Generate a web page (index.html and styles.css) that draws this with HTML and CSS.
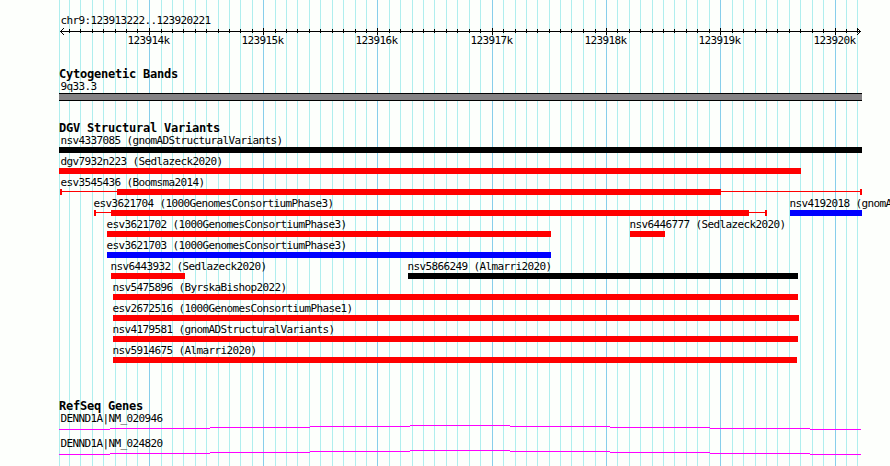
FILE: index.html
```
<!DOCTYPE html>
<html>
<head>
<meta charset="utf-8">
<title>chr9:123913222..123920221</title>
<link rel="stylesheet" href="styles.css">
</head>
<body>
<div class="browser">
  <svg class="grid" width="890" height="466">
    <path class="minor" id="grid-minor"/>
    <path class="major" id="grid-major"/>
  </svg>

  <div class="ruler">
    <div class="label region">chr9:123913222..123920221</div>
    <svg class="axis" width="890" height="20">
      <path d="M60 4.5H861"/>
      <path d="M63.8 1.2L60.5 4.5L63.8 7.8"/>
      <path d="M857.2 1.2L860.5 4.5L857.2 7.8"/>
      <path id="ticks"/>
      <text x="127.5" y="17">123914k</text>
      <text x="241.5" y="17">123915k</text>
      <text x="355.5" y="17">123916k</text>
      <text x="470.5" y="17">123917k</text>
      <text x="584.5" y="17">123918k</text>
      <text x="698.5" y="17">123919k</text>
      <text x="813.5" y="17">123920k</text>
    </svg>
  </div>

  <div class="track cytoband">
    <h2>Cytogenetic Bands</h2>
    <div class="label">9q33.3</div>
    <div class="band"></div>
  </div>

  <div class="track variants">
    <h2>DGV Structural Variants</h2>
    <div class="row">
      <div class="feature" style="margin-left:59px"><div class="label edge">nsv4337085 (gnomADStructuralVariants)</div><div class="glyph"><i class="bar black" style="width:803px"></i></div></div>
    </div>
    <div class="row">
      <div class="feature" style="margin-left:59px"><div class="label edge">dgv7932n223 (Sedlazeck2020)</div><div class="glyph"><i class="bar red" style="width:742px"></i></div></div>
    </div>
    <div class="row">
      <div class="feature" style="margin-left:60px"><div class="label flush">esv3545436 (Boomsma2014)</div><div class="glyph"><i class="cap"></i><i class="line" style="width:55px"></i><i class="bar red" style="width:604px"></i><i class="line" style="width:139px"></i><i class="cap"></i></div></div>
    </div>
    <div class="row">
      <div class="feature" style="margin-left:94px"><div class="label">esv3621704 (1000GenomesConsortiumPhase3)</div><div class="glyph"><i class="cap"></i><i class="line" style="width:15px"></i><i class="bar red" style="width:638px"></i><i class="line" style="width:16px"></i><i class="cap"></i></div></div>
      <div class="feature" style="margin-left:790px"><div class="label">nsv4192018 (gnomADStructuralVariants)</div><div class="glyph"><i class="bar blue" style="width:72px"></i></div></div>
    </div>
    <div class="row">
      <div class="feature" style="margin-left:107px"><div class="label">esv3621702 (1000GenomesConsortiumPhase3)</div><div class="glyph"><i class="bar red" style="width:444px"></i></div></div>
      <div class="feature" style="margin-left:630px"><div class="label">nsv6446777 (Sedlazeck2020)</div><div class="glyph"><i class="bar red" style="width:35px"></i></div></div>
    </div>
    <div class="row">
      <div class="feature" style="margin-left:107px"><div class="label">esv3621703 (1000GenomesConsortiumPhase3)</div><div class="glyph"><i class="bar blue" style="width:444px"></i></div></div>
    </div>
    <div class="row">
      <div class="feature" style="margin-left:111px"><div class="label">nsv6443932 (Sedlazeck2020)</div><div class="glyph"><i class="bar red" style="width:74px"></i></div></div>
      <div class="feature" style="margin-left:408px"><div class="label">nsv5866249 (Almarri2020)</div><div class="glyph"><i class="bar black" style="width:390px"></i></div></div>
    </div>
    <div class="row">
      <div class="feature" style="margin-left:113px"><div class="label">nsv5475896 (ByrskaBishop2022)</div><div class="glyph"><i class="bar red" style="width:685px"></i></div></div>
    </div>
    <div class="row">
      <div class="feature" style="margin-left:113px"><div class="label">esv2672516 (1000GenomesConsortiumPhase1)</div><div class="glyph"><i class="bar red" style="width:686px"></i></div></div>
    </div>
    <div class="row">
      <div class="feature" style="margin-left:113px"><div class="label">nsv4179581 (gnomADStructuralVariants)</div><div class="glyph"><i class="bar red" style="width:685px"></i></div></div>
    </div>
    <div class="row">
      <div class="feature" style="margin-left:113px"><div class="label">nsv5914675 (Almarri2020)</div><div class="glyph"><i class="bar red" style="width:684px"></i></div></div>
    </div>
  </div>

  <div class="track genes">
    <h2>RefSeq Genes</h2>
    <div class="gene">
      <div class="label">DENND1A|NM_020946</div>
      <svg class="intron" width="890" height="5"><path d="M59 4.5h51m0-1h100m0-1h100m0-1h100m0-1h100m0 1h100m0 1h100m0 1h100m0 1h51"/></svg>
    </div>
    <div class="gene">
      <div class="label">DENND1A|NM_024820</div>
      <svg class="intron" width="890" height="5"><path d="M59 4.5h51m0-1h100m0-1h100m0-1h100m0-1h100m0 1h100m0 1h100m0 1h100m0 1h51"/></svg>
    </div>
  </div>
</div>

<script>
// one line every 100 bp, darker every 1000 bp
var minor = [59, 69, 80, 92, 103, 115, 126, 137,
  161, 172, 183, 195, 206, 218, 229, 240, 252,
  275, 286, 297, 309, 320, 332, 343, 355, 366,
  389, 400, 412, 423, 434, 446, 457, 469, 480,
  503, 515, 526, 537, 549, 560, 571, 583, 595,
  617, 629, 640, 652, 663, 674, 686, 697, 709,
  732, 743, 755, 766, 777, 789, 800, 812, 823,
  846, 857];
var major = [149, 263, 377, 492, 606, 720, 835];

function lines(xs, top, height) {
  return xs.map(x => "M" + (x + 0.5) + " " + top + "v" + height).join("");
}

document.getElementById("grid-minor").setAttribute("d", lines(minor, 0, 466));
document.getElementById("grid-major").setAttribute("d", lines(major, 0, 466));
document.getElementById("ticks").setAttribute("d", lines(minor.slice(1), 2, 4) + lines(major, 1, 7));
</script>
</body>
</html>
```
FILE: styles.css
```
body {
  margin: 0;
  background-color: #fdfffc;
  color: black;
}

.browser {
  position: relative;
  width: 890px;
  height: 466px;
  overflow: hidden;
  font-family: "DejaVu Sans Mono", monospace;
  font-size: 11px;
  letter-spacing: -0.622px;
}

svg {
  display: block;
}

path {
  fill: none;
  stroke: black;
  shape-rendering: crispEdges;
}

/* grid lines run behind all of the tracks */
.grid {
  position: absolute;
  top: 0;
  left: 0;
  z-index: -1;
}

.grid .minor {
  stroke: #afeeee;
}

.grid .major {
  stroke: #87ceeb;
}

.label {
  height: 12px;
  line-height: 12px;
  margin-left: -1px;
  text-indent: 0.5px;
  white-space: pre;
}

.label.edge {
  margin-left: 1px;
}

.label.flush {
  margin-left: 0;
}

h2 {
  height: 13px;
  margin: 0 0 0 59px;
  font-size: 12px;
  line-height: 13px;
  font-weight: bold;
  letter-spacing: -0.224px;
}

.ruler {
  height: 68px;
  padding-top: 15px;
  box-sizing: border-box;
}

.region,
.cytoband .label,
.genes .label {
  margin-left: 60px;
}

.axis text {
  fill: black;
}

.cytoband {
  height: 54px;
}

.band {
  width: 803px;
  height: 8px;
  margin-left: 59px;
  box-sizing: border-box;
  border-top: 1px solid black;
  border-bottom: 1px solid black;
  background-color: #848284;
}

.variants {
  height: 278px;
}

.row {
  display: grid;
  height: 21px;
}

.feature {
  grid-area: 1 / 1;
}

.glyph {
  display: flex;
  height: 6px;
}

.bar {
  height: 6px;
}

.black {
  background-color: black;
}

.red {
  background-color: red;
}

.blue {
  background-color: blue;
}

.cap {
  width: 2px;
  height: 6px;
  background-color: red;
}

.line {
  height: 1px;
  margin-top: 2px;
  background-color: red;
}

.gene {
  height: 25px;
}

.intron path {
  stroke: magenta;
}
```
